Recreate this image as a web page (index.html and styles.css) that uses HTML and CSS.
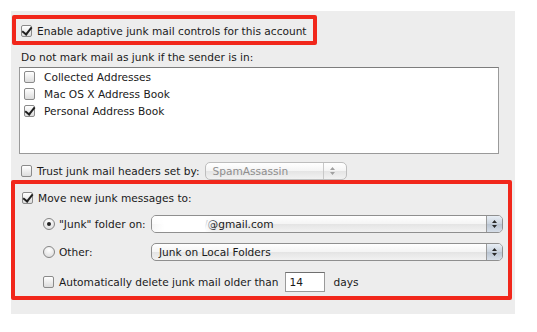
FILE: index.html
```html
<!DOCTYPE html>
<html>
<head>
<meta charset="utf-8">
<link rel="stylesheet" href="styles.css">
</head>
<body>
<div class="panel">
  <div class="hl hl-top">
    <span class="cb checked"></span>
    <span class="label">Enable adaptive junk mail controls for this account</span>
  </div>
  <div class="caption">Do not mark mail as junk if the sender is in:</div>
  <div class="list">
    <div class="item"><span class="cb"></span><span class="label">Collected Addresses</span></div>
    <div class="item"><span class="cb"></span><span class="label">Mac OS X Address Book</span></div>
    <div class="item"><span class="cb checked"></span><span class="label">Personal Address Book</span></div>
  </div>
  <div class="trust">
    <span class="cb"></span>
    <span class="label">Trust junk mail headers set by:</span>
    <div class="popup small disabled">
      <span class="ptext">SpamAssassin</span>
      <span class="arrows small-arrows">
        <svg width="7" height="10" viewBox="0 0 7 10"><path d="M3.5 1 L6 4 L1 4 Z M1 6 L6 6 L3.5 9 Z" fill="#a0a0a0"/></svg>
      </span>
    </div>
  </div>
  <div class="hl hl-bottom">
    <div class="row move">
      <span class="cb checked"></span>
      <span class="label">Move new junk messages to:</span>
    </div>
    <div class="row opt">
      <span class="radio on"></span>
      <span class="label optlabel">"Junk" folder on:</span>
      <div class="popup big">
        <span class="ptext gmail"><span class="blur"></span>/@gmail.com</span>
        <span class="arrows aqua">
          <svg width="7" height="10" viewBox="0 0 7 10"><path d="M3.5 1 L6 4 L1 4 Z M1 6 L6 6 L3.5 9 Z" fill="#2a2a2a"/></svg>
        </span>
      </div>
    </div>
    <div class="row opt">
      <span class="radio"></span>
      <span class="label optlabel">Other:</span>
      <div class="popup big">
        <span class="ptext">Junk on Local Folders</span>
        <span class="arrows aqua">
          <svg width="7" height="10" viewBox="0 0 7 10"><path d="M3.5 1 L6 4 L1 4 Z M1 6 L6 6 L3.5 9 Z" fill="#2a2a2a"/></svg>
        </span>
      </div>
    </div>
    <div class="row del">
      <span class="cb"></span>
      <span class="label">Automatically delete junk mail older than</span>
      <span class="num">14</span>
      <span class="label days">days</span>
    </div>
  </div>
</div>
</body>
</html>
```

FILE: styles.css
```css
html, body {
  margin: 0;
  padding: 0;
  background: #ffffff;
}
body {
  font-family: "DejaVu Sans", "Liberation Sans", sans-serif;
  font-size: 10.6px;
  color: #1a1a1a;
}
.panel {
  margin: 11px 0 0 11px;
  width: 504px;
  height: 303px;
  background: #ededed;
  box-sizing: border-box;
  padding-top: 4px;
  display: flex;
  flex-direction: column;
  align-items: flex-start;
}
.hl {
  border: 4px solid #f1271b;
  border-radius: 2px;
  box-sizing: border-box;
}
.hl-top {
  margin-left: 1px;
  width: 305px;
  height: 30px;
  display: flex;
  align-items: center;
  padding-left: 5px;
  padding-top: 1px;
}
.cb {
  display: inline-block;
  width: 9px;
  height: 10px;
  border: 1px solid #8a8a8a;
  border-radius: 2px;
  background: linear-gradient(#ffffff, #dcdcdc);
  position: relative;
  flex: none;
  margin-right: 5px;
}
.cb.checked::after {
  content: "";
  position: absolute;
  left: 2px;
  top: -1px;
  width: 4px;
  height: 8px;
  border-right: 2px solid #1e1e1e;
  border-bottom: 2px solid #1e1e1e;
  transform: rotate(38deg);
}
.label {
  white-space: nowrap;
}
.caption {
  margin: 5px 0 0 10px;
  line-height: 14px;
}
.list {
  margin: 3px 0 0 8px;
  width: 480px;
  height: 87px;
  box-sizing: border-box;
  background: #ffffff;
  border: 1px solid #9a9a9a;
  border-top-color: #7d7d7d;
  padding: 0 0 0 4px;
}
.item {
  display: flex;
  align-items: center;
  height: 17px;
}
.item .cb {
  margin-right: 9px;
}
.trust {
  display: flex;
  align-items: center;
  margin: 8px 0 0 10px;
  height: 18px;
}
.popup {
  display: flex;
  align-items: center;
  box-sizing: border-box;
  border: 1px solid #9c9c9c;
  border-radius: 5px;
  background: linear-gradient(#ffffff 0%, #f4f4f4 50%, #e4e4e4 51%, #f2f2f2 100%);
  position: relative;
  overflow: hidden;
}
.popup.small {
  width: 142px;
  height: 18px;
  margin-left: 5px;
  border-color: #bdbdbd;
}
.popup.disabled .ptext {
  color: #8e8e8e;
}
.ptext {
  flex: 1;
  padding-left: 7px;
  white-space: nowrap;
}
.arrows {
  width: 18px;
  align-self: stretch;
  display: flex;
  align-items: center;
  justify-content: center;
  border-left: 1px solid #c8c8c8;
}
.small-arrows {
  margin-right: 4px;
}
.hl-bottom {
  margin-top: 0;
  width: 501px;
  height: 120px;
  padding: 5px 0 0 7px;
  display: flex;
  flex-direction: column;
}
.row {
  display: flex;
  align-items: center;
}
.move {
  height: 17px;
}
.opt {
  margin-left: 21px;
  height: 18px;
}
.opt + .opt {
  margin-top: 10px;
}
.move + .opt {
  margin-top: 9px;
}
.radio {
  width: 10px;
  height: 10px;
  border: 1px solid #858585;
  border-radius: 50%;
  background: radial-gradient(circle at 50% 30%, #ffffff, #d8d8d8);
  flex: none;
  margin-right: 4px;
  position: relative;
}
.radio.on::after {
  content: "";
  position: absolute;
  left: 3px;
  top: 3px;
  width: 4px;
  height: 4px;
  border-radius: 50%;
  background: #222;
}
.optlabel {
  width: 92px;
}
.popup.big {
  width: 352px;
  height: 18px;
  border-radius: 5px;
  border-color: #8f8f8f;
}
.aqua {
  width: 15px;
  border-left: 1px solid #9a9a9a;
  background: linear-gradient(#e8eef5 0%, #c9d2dd 50%, #b9c4d1 51%, #d6dee8 100%);
}
.gmail {
  position: relative;
  padding-left: 52px;
  color: #1a1a1a;
}
.blur {
  position: absolute;
  left: 0;
  top: -3px;
  width: 62px;
  height: 22px;
  background: linear-gradient(90deg, rgba(255,255,255,0.6), #ffffff 20%, #ffffff 85%, rgba(255,255,255,0));
}
.del {
  margin-left: 21px;
  margin-top: 11px;
  height: 20px;
}
.num {
  display: inline-block;
  box-sizing: border-box;
  width: 40px;
  height: 20px;
  border: 1px solid #9a9a9a;
  border-top-color: #6f6f6f;
  background: #ffffff;
  margin-left: 6px;
  padding: 3px 0 0 4px;
  line-height: 13px;
}
.days {
  margin-left: 9px;
}
```
